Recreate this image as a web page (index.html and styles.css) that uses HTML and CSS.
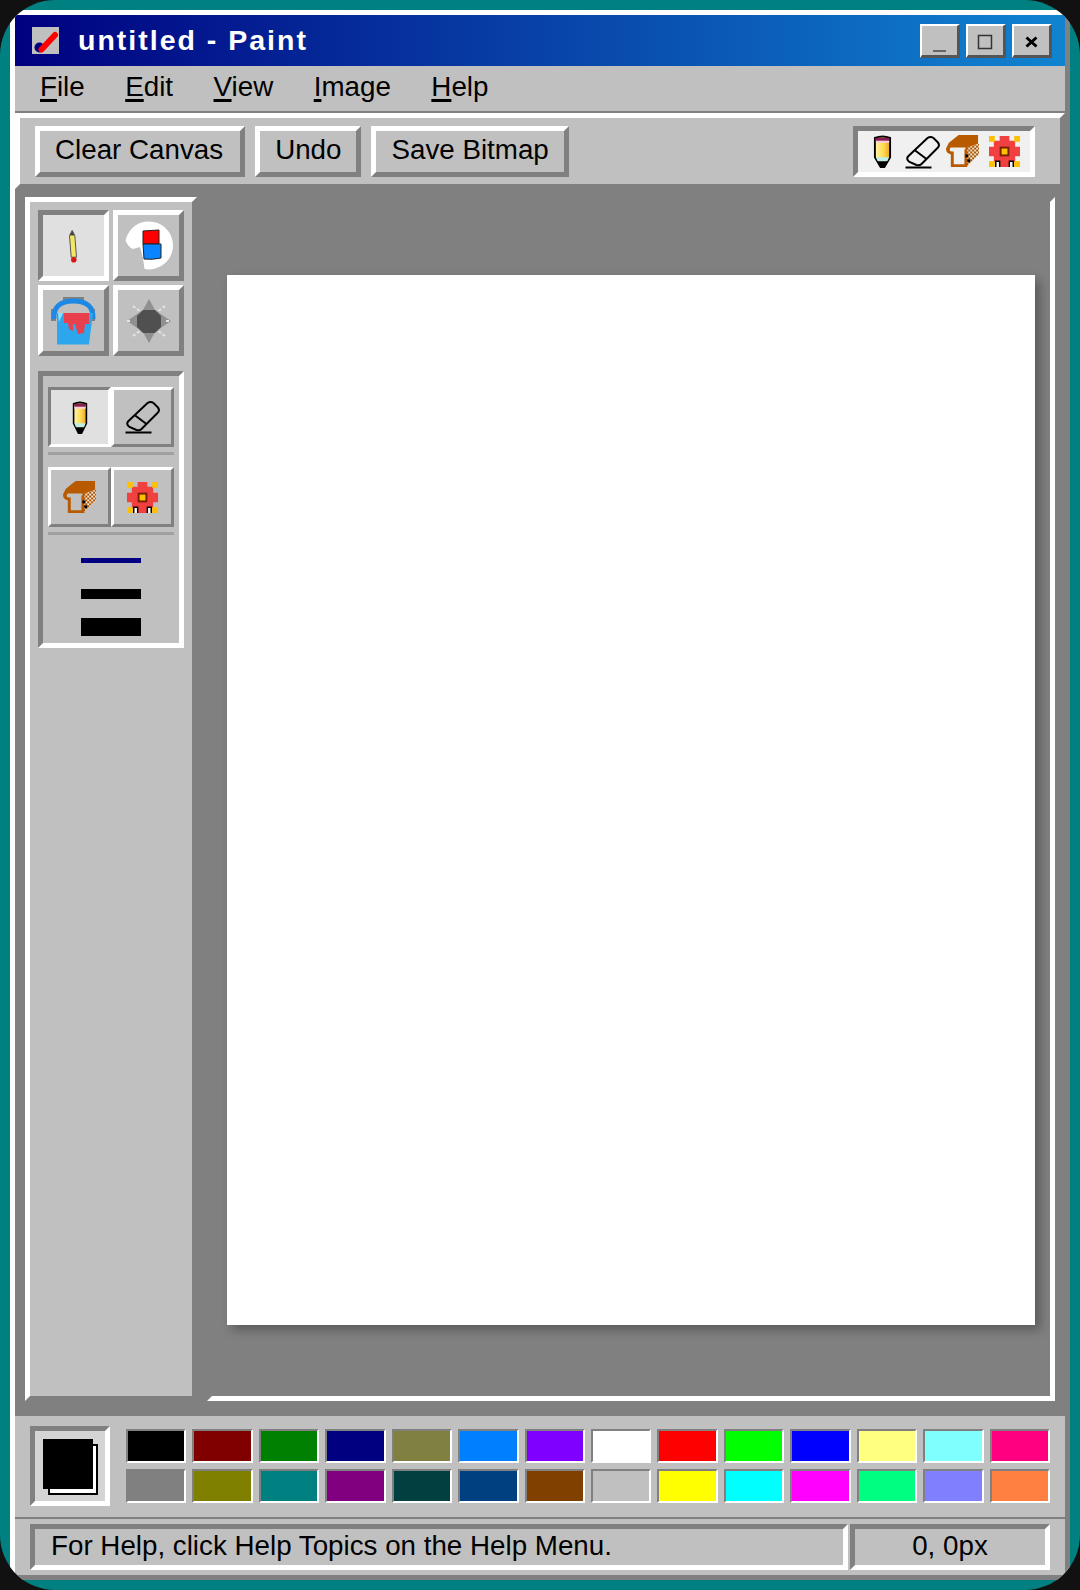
FILE: index.html
```html
<!DOCTYPE html>
<html lang="en">
<head>
<meta charset="utf-8">
<title>untitled - Paint</title>
<link rel="stylesheet" href="styles.css">
</head>
<body>
<svg class="defs" width="0" height="0" aria-hidden="true">
  <defs>
    <linearGradient id="pencilBody" x1="0" x2="1" y1="0" y2="0">
      <stop offset="0" stop-color="#fff6b0"/><stop offset=".6" stop-color="#ffd84a"/><stop offset="1" stop-color="#e8a020"/>
    </linearGradient>
    <pattern id="dither" width="4" height="4" patternUnits="userSpaceOnUse">
      <rect width="4" height="4" fill="#f4e4d0"/>
      <rect width="2" height="2" fill="#a85000"/><rect x="2" y="2" width="2" height="2" fill="#a85000"/>
    </pattern>
    <symbol id="i-pencil" viewBox="0 0 20 34" preserveAspectRatio="none">
      <path d="M2 3Q10 0 18 3V23L12 33H8L2 23Z" fill="url(#pencilBody)" stroke="#000" stroke-width="2"/>
      <rect x="3" y="3" width="14" height="3" fill="#8a1a5a"/>
      <rect x="3" y="6" width="14" height="2" fill="#f6d0e0"/>
      <path d="M3 23H17L15 27H5Z" fill="#bfeee8"/>
      <path d="M5 27H15L11 34H9Z" fill="#000"/>
    </symbol>
    <symbol id="i-eraser" viewBox="0 0 36 34">
      <path d="M4 21L23 3Q26 1 29 3L33 7Q36 10 33 13L17 29Q15 31 12 30L5 27Q1 24 4 21Z" fill="none" stroke="#000" stroke-width="2"/>
      <path d="M10 15L22 24" fill="none" stroke="#000" stroke-width="2"/>
      <path d="M1 32.500H27" stroke="#000" stroke-width="2"/>
    </symbol>
    <symbol id="i-bread" viewBox="0 0 36 36">
      <path d="M22 14L35 10V21L22 34Z" fill="url(#dither)"/>
      <path fill-rule="evenodd" d="M1 15L4 9L14 1H34V10L23 14V34H6V21Q1 20 1 15ZM5 15V17Q5 18 9 18V31H20V16H21V14H6Z" fill="#b85a00"/>
      <rect x="21" y="21" width="3" height="3" fill="#000"/><rect x="23" y="26" width="3" height="3" fill="#000"/>
    </symbol>
    <symbol id="i-gear" viewBox="0 0 34 34">
      <path d="M12 1H22V6H28V12H33V22H28V28H22V33H12V28H6V22H1V12H6V6H12Z" fill="#f04040"/>
      <g fill="#ffc000">
        <rect x="1" y="1" width="6" height="6"/><rect x="27" y="1" width="6" height="6"/>
        <rect x="1" y="27" width="6" height="6"/><rect x="27" y="27" width="6" height="6"/>
        <rect x="13" y="13" width="8" height="8" stroke="#7a2000" stroke-width="2"/>
      </g>
      <path d="M8 33V27H12V33M22 33V27H26V33" fill="#fff" stroke="#000" stroke-width="1.500"/>
    </symbol>
  </defs>
</svg>

<main class="window raised">
  <header class="titlebar">
    <div class="title-left">
      <svg class="app-icon" viewBox="0 0 27 27" aria-hidden="true">
        <rect width="27" height="27" fill="#c0c0c0"/>
        <circle cx="7.500" cy="20.500" r="5" fill="#000080"/>
        <path d="M9.500 22.500L23 8" stroke="#ff0000" stroke-width="6" stroke-linecap="round"/>
      </svg>
      <h1 class="title-text">untitled - Paint</h1>
    </div>
    <div class="win-controls">
      <div class="win-btn">
        <svg class="win-glyph" viewBox="0 0 35 29" aria-hidden="true"><path d="M11 25H24" stroke="#666" stroke-width="2"/></svg>
      </div>
      <div class="win-btn">
        <svg class="win-glyph" viewBox="0 0 35 29" aria-hidden="true"><rect x="10.500" y="9.500" width="13" height="13" fill="none" stroke="#333" stroke-width="1.500"/></svg>
      </div>
      <div class="win-btn">
        <svg class="win-glyph" viewBox="0 0 35 29" aria-hidden="true"><path d="M12.500 11.500L22.500 20.500M22.500 11.500L12.500 20.500" stroke="#000" stroke-width="3"/></svg>
      </div>
    </div>
  </header>

  <nav class="menubar">
    <span class="menu-item"><u>F</u>ile</span>
    <span class="menu-item"><u>E</u>dit</span>
    <span class="menu-item"><u>V</u>iew</span>
    <span class="menu-item"><u>I</u>mage</span>
    <span class="menu-item"><u>H</u>elp</span>
  </nav>

  <section class="toolbar raised">
    <div class="toolbar-buttons">
      <button class="tb-btn raised">Clear Canvas</button>
      <button class="tb-btn raised">Undo</button>
      <button class="tb-btn raised">Save Bitmap</button>
    </div>
    <div class="tb-icons sunken">
      <svg class="tb-pencil"><use href="#i-pencil"/></svg>
      <svg class="tb-eraser"><use href="#i-eraser"/></svg>
      <svg class="tb-bread"><use href="#i-bread"/></svg>
      <svg class="tb-gear"><use href="#i-gear"/></svg>
    </div>
  </section>

  <section class="workspace">
    <aside class="sidebar raised">
      <div class="tools">
        <div class="tool sunken pressed">
          <svg class="tool-svg" viewBox="0 0 60 60" aria-hidden="true">
            <path d="M25.500 19.500L28.200 14.500L30.800 19.500L32.500 41.200L27.200 41.200Z" fill="#f4e860" stroke="#555" stroke-width="1"/>
            <path d="M25.800 19.500L28.200 14.500L30.600 19.500Z" fill="#444"/>
            <circle cx="29.800" cy="43.800" r="2.800" fill="#d81818"/>
          </svg>
        </div>
        <div class="tool raised">
          <svg class="tool-svg" viewBox="0 0 60 60" aria-hidden="true">
            <path d="M6.500 24.500A24 24 0 1 1 25.500 53L24 42L21 31L14 33Q9 31 6.500 24.500Z" fill="#fff"/>
            <path d="M24 15L40 14V28H24Z" fill="#ff0000" stroke="#222" stroke-width="1"/>
            <path d="M24 28H42V42Q33 44 25 43Z" fill="#0a84ff" stroke="#222" stroke-width="1"/>
          </svg>
        </div>
        <div class="tool raised">
          <svg class="tool-svg" viewBox="0 0 60 60" aria-hidden="true">
            <path d="M19 6H40V10H19ZM7 18H12V30H7ZM47 18H51V30H47Z" fill="#808080"/>
            <path d="M10 28Q9 10 29.500 10Q50 10 49 28" fill="none" stroke="#1e88e5" stroke-width="5"/>
            <path d="M13 22H49L45 53.500H13Z" fill="#2ea6ee"/>
            <path d="M20 22H45V33L41 33L40 42L34 43L31 33L29 33L29 40L25 38L24 32H20Z" fill="#e8404c"/>
            <path d="M14 22H19L15 31Z" fill="#8fe0ff"/>
          </svg>
        </div>
        <div class="tool raised">
          <svg class="tool-svg" viewBox="0 0 60 60" aria-hidden="true">
            <path d="M30 8L36 19L52 30L36 41L30 52L24 41L8 30L24 19Z" fill="#909090"/>
            <path d="M14 15L22 21M46 15L38 21M14 45L22 39M46 45L38 39M8 30H13M47 30H52" stroke="#e4e4e4" stroke-width="2" stroke-dasharray="3 2"/>
            <path d="M24 19H36L42 25V36L36 42H24L18 36V25Z" fill="#505050"/>
          </svg>
        </div>
      </div>

      <div class="options sunken">
        <div class="opt-row">
          <div class="opt sunken pressed"><svg class="opt-pencil"><use href="#i-pencil"/></svg></div>
          <div class="opt raised"><svg class="opt-eraser"><use href="#i-eraser"/></svg></div>
        </div>
        <div class="opt-divider"></div>
        <div class="opt-row">
          <div class="opt raised"><svg class="opt-bread"><use href="#i-bread"/></svg></div>
          <div class="opt raised"><svg class="opt-gear"><use href="#i-gear"/></svg></div>
        </div>
        <div class="opt-divider"></div>
        <div class="sizes">
          <div class="size-cell"><span class="size s1"></span></div>
          <div class="size-cell"><span class="size s2"></span></div>
          <div class="size-cell"><span class="size s3"></span></div>
        </div>
      </div>
    </aside>
    <div class="canvas-area sunken">
      <div class="canvas"></div>
    </div>
  </section>

  <section class="palette">
    <div class="current sunken">
      <div class="cur-back"></div>
      <div class="cur-front"></div>
    </div>
    <div class="swatches">
      <div class="swatch c-000000"></div><div class="swatch c-800000"></div><div class="swatch c-008000"></div><div class="swatch c-000080"></div><div class="swatch c-808040"></div><div class="swatch c-0080ff"></div><div class="swatch c-8000ff"></div><div class="swatch c-ffffff"></div><div class="swatch c-ff0000"></div><div class="swatch c-00ff00"></div><div class="swatch c-0000ff"></div><div class="swatch c-ffff80"></div><div class="swatch c-80ffff"></div><div class="swatch c-ff0080"></div>
      <div class="swatch c-808080"></div><div class="swatch c-808000"></div><div class="swatch c-008080"></div><div class="swatch c-800080"></div><div class="swatch c-004040"></div><div class="swatch c-004080"></div><div class="swatch c-804000"></div><div class="swatch c-c0c0c0"></div><div class="swatch c-ffff00"></div><div class="swatch c-00ffff"></div><div class="swatch c-ff00ff"></div><div class="swatch c-00ff80"></div><div class="swatch c-8080ff"></div><div class="swatch c-ff8040"></div>
    </div>
  </section>

  <footer class="statusbar">
    <div class="status-main sunken">For Help, click Help Topics on the Help Menu.</div>
    <div class="status-pos sunken">0, 0px</div>
  </footer>
</main>
</body>
</html>
```
FILE: styles.css
```css
* { box-sizing: border-box; }
html { background: #111; }
body {
  margin: 0;
  width: 1080px;
  height: 1590px;
  padding: 10px;
  background: #008080;
  border-radius: 55px;
  overflow: hidden;
  font-family: "Liberation Sans", Arial, sans-serif;
  color: #000;
}
.defs { position: absolute; }
svg { display: block; }

.raised { border: 5px solid; border-color: #fff #808080 #808080 #fff; }
.sunken { border: 5px solid; border-color: #808080 #fff #fff #808080; }

.window {
  width: 1060px;
  height: 1570px;
  background: #c0c0c0;
  display: flex;
  flex-direction: column;
}

.titlebar {
  height: 51px;
  flex: none;
  background: linear-gradient(90deg, #000080, #1084d0);
  display: flex;
  justify-content: space-between;
  align-items: center;
  padding: 0 13px 0 17px;
}
.title-left { display: flex; align-items: center; gap: 19px; }
.app-icon { width: 27px; height: 27px; }
.title-text {
  margin: 0;
  font-size: 28.5px;
  font-weight: 700;
  letter-spacing: 2px;
  color: #fff;
}
.win-controls { display: flex; gap: 6px; }
.win-btn {
  width: 40px;
  height: 34px;
  background: #c0c0c0;
  border: solid;
  border-width: 2px 3px 3px 2px;
  border-color: #fff #555 #555 #fff;
}
.win-glyph { width: 35px; height: 29px; }

.menubar {
  height: 47px;
  flex: none;
  display: flex;
  align-items: center;
  gap: 10.5px;
  padding: 0 0 3px 10px;
  border-bottom: 2px solid #808080;
  font-size: 27.75px;
}
.menu-item { padding: 0 15px; }
.menu-item u { text-decoration-thickness: 3px; text-underline-offset: 3px; }

.toolbar {
  height: 76px;
  flex: none;
  padding: 3px 25px 2px 15px;
  display: flex;
  justify-content: space-between;
  align-items: center;
}
.toolbar-buttons { display: flex; gap: 10px; }
.tb-btn {
  height: 51px;
  padding: 0 15px 4px;
  background: #c0c0c0;
  font: inherit;
  font-size: 27.75px;
  color: #000;
}
.tb-btn:first-child { padding-left: 15px; padding-right: 17px; }
.tb-icons {
  width: 182px;
  height: 51px;
  background: #f0f0f0;
  display: flex;
  align-items: center;
  padding-left: 15px;
}
.tb-pencil { width: 19px; height: 33px; }
.tb-eraser { width: 37px; height: 34px; margin-left: 12px; }
.tb-bread { width: 35px; height: 35px; margin-left: 4px; }
.tb-gear { width: 33px; height: 33px; margin-left: 8px; }

.workspace {
  height: 1227px;
  flex: none;
  background: #808080;
  display: flex;
  gap: 10px;
  padding: 8px 10px 15px 10px;
}
.sidebar {
  width: 172px;
  flex: none;
  background: #c0c0c0;
  padding: 8px;
}
.tools {
  display: grid;
  grid-template-columns: 71px 71px;
  grid-auto-rows: 71px;
  gap: 4px;
}
.tool { background: #c0c0c0; }
.pressed { background: #e0e0e0; }
.tool-svg { width: 60px; height: 60px; margin: 0.5px; }

.options {
  margin-top: 15px;
  height: 277px;
  padding: 11px 5px 0;
}
.opt-row { display: flex; }
.opt {
  width: 63px;
  height: 60px;
  border-width: 3px;
  background: #c0c0c0;
  display: flex;
  align-items: center;
  justify-content: center;
}
.opt.pressed { background: #e0e0e0; }
.opt-pencil { width: 16px; height: 33px; }
.opt-eraser { width: 37px; height: 34px; }
.opt-bread { width: 35px; height: 35px; }
.opt-gear { width: 33px; height: 33px; }
.opt-divider {
  height: 3px;
  background: #a0a0a0;
  margin: 5px 0 12px;
}
.sizes { margin-top: -3px; }
.size-cell {
  height: 33px;
  display: flex;
  align-items: center;
  justify-content: center;
}
.size { display: block; width: 60px; background: #000; }
.s1 { height: 5px; background: #000080; }
.s2 { height: 10px; }
.s3 { height: 18px; }

.canvas-area {
  flex: 1;
  display: flex;
  align-items: center;
  justify-content: center;
}
.canvas {
  width: 808px;
  height: 1050px;
  flex: none;
  margin-top: 2px;
  background: #fff;
  box-shadow: 5px 5px 10px rgba(0, 0, 0, 0.3);
}

.palette {
  height: 103px;
  flex: none;
  display: flex;
  align-items: center;
  gap: 16px;
  padding: 0 15px 2px;
  border-bottom: 2px solid #808080;
}
.current {
  width: 80px;
  height: 80px;
  flex: none;
  position: relative;
  background: #d4d4d4;
}
.cur-back {
  position: absolute;
  left: 13px;
  top: 13px;
  width: 50px;
  height: 51px;
  background: #fff;
  border: 2px solid #000;
}
.cur-front {
  position: absolute;
  left: 8px;
  top: 8px;
  width: 50px;
  height: 50px;
  background: #000;
}
.swatches {
  flex: 1;
  display: grid;
  grid-template-columns: repeat(14, 1fr);
  grid-auto-rows: 34px;
  gap: 6px;
}
.swatch {
  border: 2px solid;
  border-color: #808080 #fff #fff #808080;
}
.c-000000 { background: #000000; } .c-800000 { background: #800000; } .c-008000 { background: #008000; }
.c-000080 { background: #000080; } .c-808040 { background: #808040; } .c-0080ff { background: #0080ff; }
.c-8000ff { background: #8000ff; } .c-ffffff { background: #ffffff; } .c-ff0000 { background: #ff0000; }
.c-00ff00 { background: #00ff00; } .c-0000ff { background: #0000ff; } .c-ffff80 { background: #ffff80; }
.c-80ffff { background: #80ffff; } .c-ff0080 { background: #ff0080; } .c-808080 { background: #808080; }
.c-808000 { background: #808000; } .c-008080 { background: #008080; } .c-800080 { background: #800080; }
.c-004040 { background: #004040; } .c-004080 { background: #004080; } .c-804000 { background: #804000; }
.c-c0c0c0 { background: #c0c0c0; } .c-ffff00 { background: #ffff00; } .c-00ffff { background: #00ffff; }
.c-ff00ff { background: #ff00ff; } .c-00ff80 { background: #00ff80; } .c-8080ff { background: #8080ff; }
.c-ff8040 { background: #ff8040; }

.statusbar {
  flex: 1;
  display: flex;
  align-items: center;
  gap: 2px;
  padding: 0 15px;
  font-size: 27.75px;
}
.status-main {
  width: 818px;
  height: 46px;
  line-height: 34px;
  padding-left: 16px;
}
.status-pos {
  flex: 1;
  height: 46px;
  line-height: 34px;
  text-align: center;
}
```
